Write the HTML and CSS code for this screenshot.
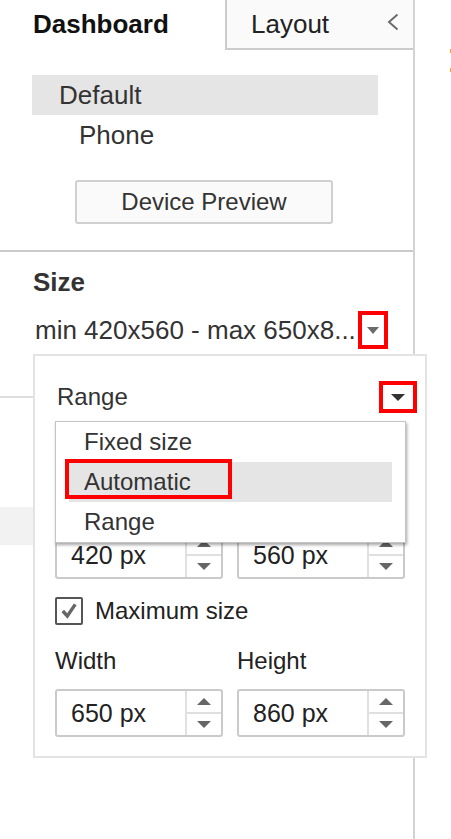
FILE: index.html
```html
<!DOCTYPE html>
<html lang="en">
<head>
    <meta charset="UTF-8">
    <meta name="viewport" content="width=device-width, initial-scale=1.0">
    <title>Dashboard layout</title>
    <link rel="stylesheet" href="styles.css">
</head>
<body>

    <div class="app">
        <aside class="sidebar">

            <div class="tabs">
                <div class="tab-active">Dashboard</div>
                <div class="tab-layout">
                    <span>Layout</span>
                    <svg class="chevron" viewBox="0 0 12 18"><polyline points="10.5,1.5 2,9 10.5,16.5" fill="none" stroke="#6b6b6b" stroke-width="2"/></svg>
                </div>
            </div>

            <div class="devices">
                <div class="device selected">Default</div>
                <div class="device sub">Phone</div>
                <button class="preview">Device Preview</button>
            </div>

            <div class="size">
                <h2>Size</h2>
                <div class="size-value">
                    <span>min 420x560 - max 650x8...</span>
                    <span class="mark mark-value">
                        <svg viewBox="0 0 12 7"><polygon points="0,0 12,0 6,7" fill="#6b6b6b"/></svg>
                    </span>
                </div>
            </div>

            <div class="objects">
                <div class="object-row"></div>
            </div>

            <!-- size popup -->
            <div class="popup">
                <div class="popup-head">
                    <span>Range</span>
                    <span class="mark mark-head">
                        <svg viewBox="0 0 14 7"><polygon points="0,0 14,0 7,7" fill="#333"/></svg>
                    </span>
                </div>

                <div class="fields first">
                    <div class="field">
                        <span class="value">420 px</span>
                        <div class="spin">
                            <b><svg viewBox="0 0 14 7"><polygon points="0,7 14,7 7,0" fill="#666"/></svg></b>
                            <b><svg viewBox="0 0 14 7"><polygon points="0,0 14,0 7,7" fill="#666"/></svg></b>
                        </div>
                    </div>
                    <div class="field">
                        <span class="value">560 px</span>
                        <div class="spin">
                            <b><svg viewBox="0 0 14 7"><polygon points="0,7 14,7 7,0" fill="#666"/></svg></b>
                            <b><svg viewBox="0 0 14 7"><polygon points="0,0 14,0 7,7" fill="#666"/></svg></b>
                        </div>
                    </div>
                </div>

                <label class="check">
                    <span class="box">
                        <svg viewBox="0 0 24 24"><polyline points="4.5,12 10,18 19.5,4" fill="none" stroke="#666" stroke-width="4"/></svg>
                    </span>
                    Maximum size
                </label>

                <div class="labels">
                    <span>Width</span>
                    <span>Height</span>
                </div>
                <div class="fields">
                    <div class="field">
                        <span class="value">650 px</span>
                        <div class="spin">
                            <b><svg viewBox="0 0 14 7"><polygon points="0,7 14,7 7,0" fill="#666"/></svg></b>
                            <b><svg viewBox="0 0 14 7"><polygon points="0,0 14,0 7,7" fill="#666"/></svg></b>
                        </div>
                    </div>
                    <div class="field">
                        <span class="value">860 px</span>
                        <div class="spin">
                            <b><svg viewBox="0 0 14 7"><polygon points="0,7 14,7 7,0" fill="#666"/></svg></b>
                            <b><svg viewBox="0 0 14 7"><polygon points="0,0 14,0 7,7" fill="#666"/></svg></b>
                        </div>
                    </div>
                </div>

                <ul class="options">
                    <li>Fixed size</li>
                    <li class="current">Automatic<span class="mark mark-option"></span></li>
                    <li>Range</li>
                </ul>
            </div>

        </aside>

        <div class="canvas">
            <i></i>
            <i></i>
        </div>
    </div>

</body>
</html>
```

FILE: styles.css
```css
body{
    margin: 0;
    font-family: "Liberation Sans", Arial, sans-serif;
    color: #333;
    background-color: #fff;
}

.app{
    display: flex;
    min-height: 839px;
}

.sidebar{
    position: relative;
    width: 415px;
    flex-shrink: 0;
    box-sizing: border-box;
    border-right: 2px solid #d3d3d3;
}

/* tabs */
.tabs{
    display: flex;
    height: 50px;
}

.tab-active{
    width: 225px;
    box-sizing: border-box;
    padding-left: 33px;
    font-size: 26px;
    font-weight: bold;
    line-height: 48px;
    color: #111;
}

.tab-layout{
    flex: 1;
    display: flex;
    justify-content: space-between;
    padding-left: 24px;
    background-color: #fafafa;
    border-left: 2px solid #ccc;
    border-bottom: 2px solid #ccc;
    font-size: 26px;
    line-height: 48px;
    color: #222;
}

.chevron{
    width: 12px;
    height: 18px;
    margin: 13px 14px 0 0;
}

/* devices */
.devices{
    padding: 25px 0 26px;
    border-bottom: 2px solid #cacaca;
}

.device{
    width: 346px;
    height: 40px;
    margin-left: 32px;
    box-sizing: border-box;
    padding-left: 27px;
    font-size: 26px;
    line-height: 40px;
}

.selected{
    background-color: #e5e5e5;
}

.sub{
    height: 41px;
    padding-left: 47px;
}

.preview{
    display: block;
    width: 258px;
    height: 44px;
    margin: 24px 0 0 75px;
    padding: 0;
    font-family: inherit;
    font-size: 24px;
    color: #333;
    background-color: #fafafa;
    border: 2px solid #d0d0d0;
    border-radius: 3px;
}

/* size */
.size{
    padding: 10px 25px 47px 0;
    border-bottom: 2px solid #dedede;
}

.size h2{
    margin: 0;
    padding-left: 33px;
    font-size: 26px;
    line-height: 40px;
}

.size-value{
    display: flex;
    align-items: center;
    height: 38px;
    margin-top: 9px;
    padding-left: 35px;
    font-size: 26px;
    white-space: nowrap;
}

.mark{
    box-sizing: border-box;
    border: 4px solid #f00;
}

.mark-value{
    display: flex;
    align-items: center;
    justify-content: center;
    width: 30px;
    height: 38px;
    margin-left: auto;
}

.mark-value svg{
    width: 12px;
    height: 7px;
}

.objects{
    padding-top: 109px;
}

.object-row{
    height: 38px;
    background-color: #f2f2f2;
}

/* popup */
.popup{
    position: absolute;
    left: 33px;
    top: 354px;
    width: 394px;
    box-sizing: border-box;
    padding: 0 20px 19px;
    background-color: #fff;
    border: 2px solid #e3e3e3;
    color: #222;
}

.popup-head{
    display: flex;
    align-items: center;
    justify-content: space-between;
    height: 32px;
    margin-top: 25px;
    padding-left: 2px;
    font-size: 24px;
    color: #333;
}

.mark-head{
    display: flex;
    align-items: center;
    justify-content: center;
    width: 38px;
    height: 32px;
    margin-right: -12px;
}

.mark-head svg{
    width: 14px;
    height: 7px;
}

.labels{
    display: flex;
    gap: 14px;
    height: 28px;
    margin-top: 22px;
    font-size: 24px;
    line-height: 28px;
}

.labels span{
    width: 168px;
}

.fields{
    display: flex;
    gap: 14px;
    margin-top: 14px;
}

.fields.first{
    margin-top: 118px;
}

.field{
    display: flex;
    width: 168px;
    height: 48px;
    box-sizing: border-box;
    border: 2px solid #cacaca;
    border-radius: 3px;
}

.value{
    flex: 1;
    padding-left: 14px;
    font-size: 25px;
    line-height: 44px;
}

.spin{
    display: flex;
    flex-direction: column;
    width: 36px;
    box-sizing: border-box;
    border-left: 2px solid #e0e0e0;
}

.spin b{
    flex: 1;
    display: flex;
    align-items: center;
    justify-content: center;
}

.spin b + b{
    border-top: 2px solid #e0e0e0;
}

.spin svg{
    width: 14px;
    height: 7px;
}

.check{
    display: flex;
    align-items: center;
    gap: 12px;
    height: 28px;
    margin-top: 18px;
    font-size: 24px;
}

.box{
    display: flex;
    width: 28px;
    height: 28px;
    box-sizing: border-box;
    padding: 2px;
    border: 2px solid #555;
    border-radius: 2px;
}

.box svg{
    width: 20px;
    height: 20px;
}

/* dropdown list */
.options{
    position: absolute;
    left: 20px;
    top: 65px;
    width: 351px;
    box-sizing: border-box;
    margin: 0;
    padding: 0 13px;
    list-style: none;
    background-color: #fff;
    border: 1px solid #c4c4c4;
    box-shadow: 1px 2px 3px rgba(0, 0, 0, 0.35);
}

.options li{
    position: relative;
    height: 40px;
    padding-left: 15px;
    font-size: 24px;
    line-height: 40px;
    color: #333;
}

.options .current{
    background-color: #e5e5e5;
}

.mark-option{
    position: absolute;
    left: -4px;
    top: -3px;
    width: 167px;
    height: 40px;
}

/* canvas edge */
.canvas{
    flex: 1;
    padding: 49px 0 0 35px;
}

.canvas i{
    display: block;
    width: 1px;
    height: 4px;
    margin-bottom: 15px;
    background-color: #f5a623;
}
```
